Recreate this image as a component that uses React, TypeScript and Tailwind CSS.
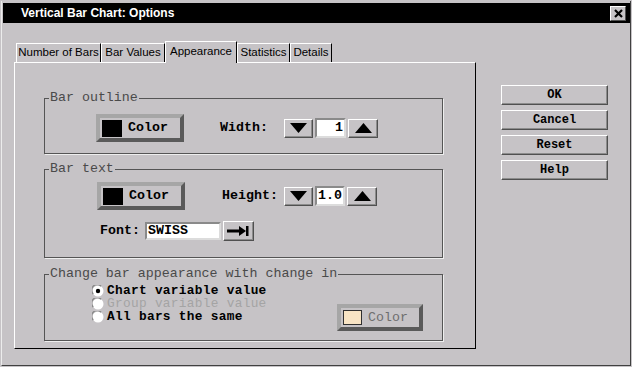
import React from "react";

const mono = "font-['Liberation_Mono',monospace]";
const sans = "font-['Liberation_Sans',Arial,sans-serif]";

const tabs = [
  { label: "Number of Bars", w: "w-[85px] ml-[2px]" },
  { label: "Bar Values", w: "w-[64px]" },
  { label: "Appearance", w: "w-[72px]", active: true },
  { label: "Statistics", w: "w-[53px]" },
  { label: "Details", w: "w-[42px]" },
];

const TriDown = () => (
  <svg width="17" height="10" viewBox="0 0 17 10">
    <polygon points="0,0 17,0 8.5,10" fill="#000" />
  </svg>
);

const TriUp = () => (
  <svg width="17" height="10" viewBox="0 0 17 10">
    <polygon points="8.5,0 17,10 0,10" fill="#000" />
  </svg>
);

const SmallButton = ({ children, className = "" }: { children: React.ReactNode; className?: string }) => (
  <div
    className={`flex items-center justify-center border border-t-white border-l-white border-r-[#505050] border-b-[#505050] shadow-[inset_-1px_-1px_0_#8c8c8c] ${className}`}
  >
    {children}
  </div>
);

const ColorButton = ({ swatch, disabled = false, className = "" }: { swatch: string; disabled?: boolean; className?: string }) => (
  <div
    className={`flex items-center border-[4px] border-t-[#a6a6a6] border-l-[#a6a6a6] border-r-[#5a5a5a] border-b-[#5a5a5a] ${className}`}
  >
    <div className={`ml-[2px] ${disabled ? "w-[19px] h-[15px] border border-[#303030]" : "w-[20px] h-[17px]"} ${swatch}`} />
    <span
      className={`${mono} text-[13.3px] leading-[14px] ml-[6px] ${disabled ? "text-[#6e6e6e]" : "font-bold text-black"}`}
    >
      Color
    </span>
  </div>
);

const Spinner = ({ value, inputW }: { value: string; inputW: string }) => (
  <div className="flex items-center gap-[2px]">
    <SmallButton className="w-[29px] h-[19px]">
      <TriDown />
    </SmallButton>
    <div
      className={`${inputW} h-[20px] bg-white border-2 border-t-[#8a8a8a] border-l-[#8a8a8a] border-r-[#dcdcdc] border-b-[#dcdcdc] flex items-center justify-end pr-[1px] ${mono} text-[13.3px] font-bold leading-none`}
    >
      {value}
    </div>
    <SmallButton className="w-[30px] h-[19px]">
      <TriUp />
    </SmallButton>
  </div>
);

const Radio = ({ checked = false }: { checked?: boolean }) => (
  <svg width="12" height="12" viewBox="0 0 12 12" className="shrink-0">
    <circle cx="6" cy="6" r="5.5" fill="#fff" />
    <path d="M1.2 9 A5.3 5.3 0 0 1 9 1.2" fill="none" stroke="#8a8a8a" strokeWidth="1.4" />
    {checked && <circle cx="6" cy="6" r="2.2" fill="#000" />}
  </svg>
);

const Group = ({ title, children, className = "" }: { title: string; children: React.ReactNode; className?: string }) => (
  <fieldset className={`w-[399px] border border-[#555] shadow-[1px_1px_0_#eeeeee] ${className}`}>
    <legend className={`ml-[4px] px-[1px] ${mono} text-[13.3px] leading-[14px] text-[#4a4a4a]`}>{title}</legend>
    {children}
  </fieldset>
);

export default function App() {
  return (
    <div className="w-[632px] h-[367px] bg-[#c6c3c6] p-[1px]">
      <div className="h-full flex flex-col border-l border-r border-b border-l-[#ececec] border-r-[#404040] border-b-[#404040] pl-[1px] pt-[2px]">
        {/* title bar */}
        <div className="h-[20px] bg-black flex items-center pl-[18px] pr-[4px]">
          <span className={`${sans} text-[12px] font-bold text-white`}>Vertical Bar Chart: Options</span>
          <div className="ml-auto w-[16px] h-[15px] bg-[#c6c3c6] border border-t-white border-l-white border-r-[#505050] border-b-[#505050] flex items-center justify-center">
            <svg width="9" height="9" viewBox="0 0 9 9">
              <path d="M1 1 L8 8 M8 1 L1 8" stroke="#000" strokeWidth="2.2" />
            </svg>
          </div>
        </div>

        <div className="flex">
          {/* left: tabs + panel */}
          <div className="ml-[11px] flex flex-col">
            <div className="mt-[18px] h-[21px] flex items-end">
              {tabs.map((t) =>
                t.active ? (
                  <div
                    key={t.label}
                    className={`${t.w} h-[22px] -mb-[1px] relative z-10 bg-[#c6c3c6] border-t border-l border-r border-t-white border-l-white border-r-black flex items-center justify-center pb-[2px] ${sans} text-[11.5px] text-black`}
                  >
                    {t.label}
                  </div>
                ) : (
                  <div
                    key={t.label}
                    className={`${t.w} h-[19px] border-t border-l border-r border-t-white border-l-white border-r-black flex items-center justify-center ${sans} text-[11.5px] text-black`}
                  >
                    {t.label}
                  </div>
                )
              )}
            </div>
            <div className="w-[462px] h-[287px] border border-t-white border-l-white border-r-black border-b-black pl-[29px] pt-[28px]">
              <Group title="Bar outline">
                <div className="flex items-center pl-[51px] pt-[9px] pb-[11px]">
                  <ColorButton swatch="bg-black" className="w-[88px] h-[28px]" />
                  <span className={`${mono} text-[13.3px] font-bold ml-[36px] w-[64px]`}>Width:</span>
                  <Spinner value="1" inputW="w-[31px]" />
                </div>
              </Group>

              <Group title="Bar text" className="mt-[8px]">
                <div className="flex flex-col pl-[52px] pt-[6px] pb-[16px]">
                  <div className="flex items-center">
                    <ColorButton swatch="bg-black" className="w-[88px] h-[28px]" />
                    <span className={`${mono} text-[13.3px] font-bold ml-[37px] w-[62px]`}>Height:</span>
                    <Spinner value="1.0" inputW="w-[30px]" />
                  </div>
                  <div className="flex items-center mt-[11px] ml-[3px]">
                    <span className={`${mono} text-[13.3px] font-bold w-[45px]`}>Font:</span>
                    <div
                      className={`w-[76px] h-[18px] bg-white border-2 border-t-[#8a8a8a] border-l-[#8a8a8a] border-r-[#dcdcdc] border-b-[#dcdcdc] flex items-center pl-[1px] ${mono} text-[13.3px] font-bold leading-none`}
                    >
                      SWISS
                    </div>
                    <SmallButton className="w-[31px] h-[20px] ml-[2px]">
                      <svg width="23" height="12" viewBox="0 0 23 12">
                        <rect x="0" y="4.5" width="14" height="3" fill="#000" />
                        <polygon points="12,1 19,6 12,11" fill="#000" />
                        <rect x="19" y="1" width="2.5" height="10" fill="#000" />
                      </svg>
                    </SmallButton>
                  </div>
                </div>
              </Group>

              <Group title="Change bar appearance with change in" className="mt-[9px]">
                <div className="flex items-start pb-[9px]">
                  <div className={`flex flex-col pt-[3px] pl-[47px] ${mono} text-[12.8px]`}>
                    <div className="h-[13px] flex items-center gap-[3px] font-bold leading-[12px]">
                      <Radio checked />
                      <span className="tracking-[0.3px]">Chart variable value</span>
                    </div>
                    <div className="h-[13px] flex items-center gap-[3px] text-[#a4a4a4] leading-[12px]">
                      <Radio />
                      <span className="tracking-[0.3px]">Group variable value</span>
                    </div>
                    <div className="h-[13px] flex items-center gap-[3px] font-bold leading-[12px]">
                      <Radio />
                      <span className="tracking-[0.3px]">All bars the same</span>
                    </div>
                  </div>
                  <ColorButton swatch="bg-[#f8e4c4]" disabled className="w-[86px] h-[27px] mt-[23px] ml-auto mr-[19px]" />
                </div>
              </Group>
            </div>
          </div>

          {/* right: action buttons */}
          <div className={`ml-[25px] mt-[62px] flex flex-col gap-[5px] ${mono} text-[12px] font-bold`}>
            {["OK", "Cancel", "Reset", "Help"].map((b) => (
              <SmallButton key={b} className="w-[107px] h-[20px]">
                {b}
              </SmallButton>
            ))}
          </div>
        </div>
      </div>
    </div>
  );
}
